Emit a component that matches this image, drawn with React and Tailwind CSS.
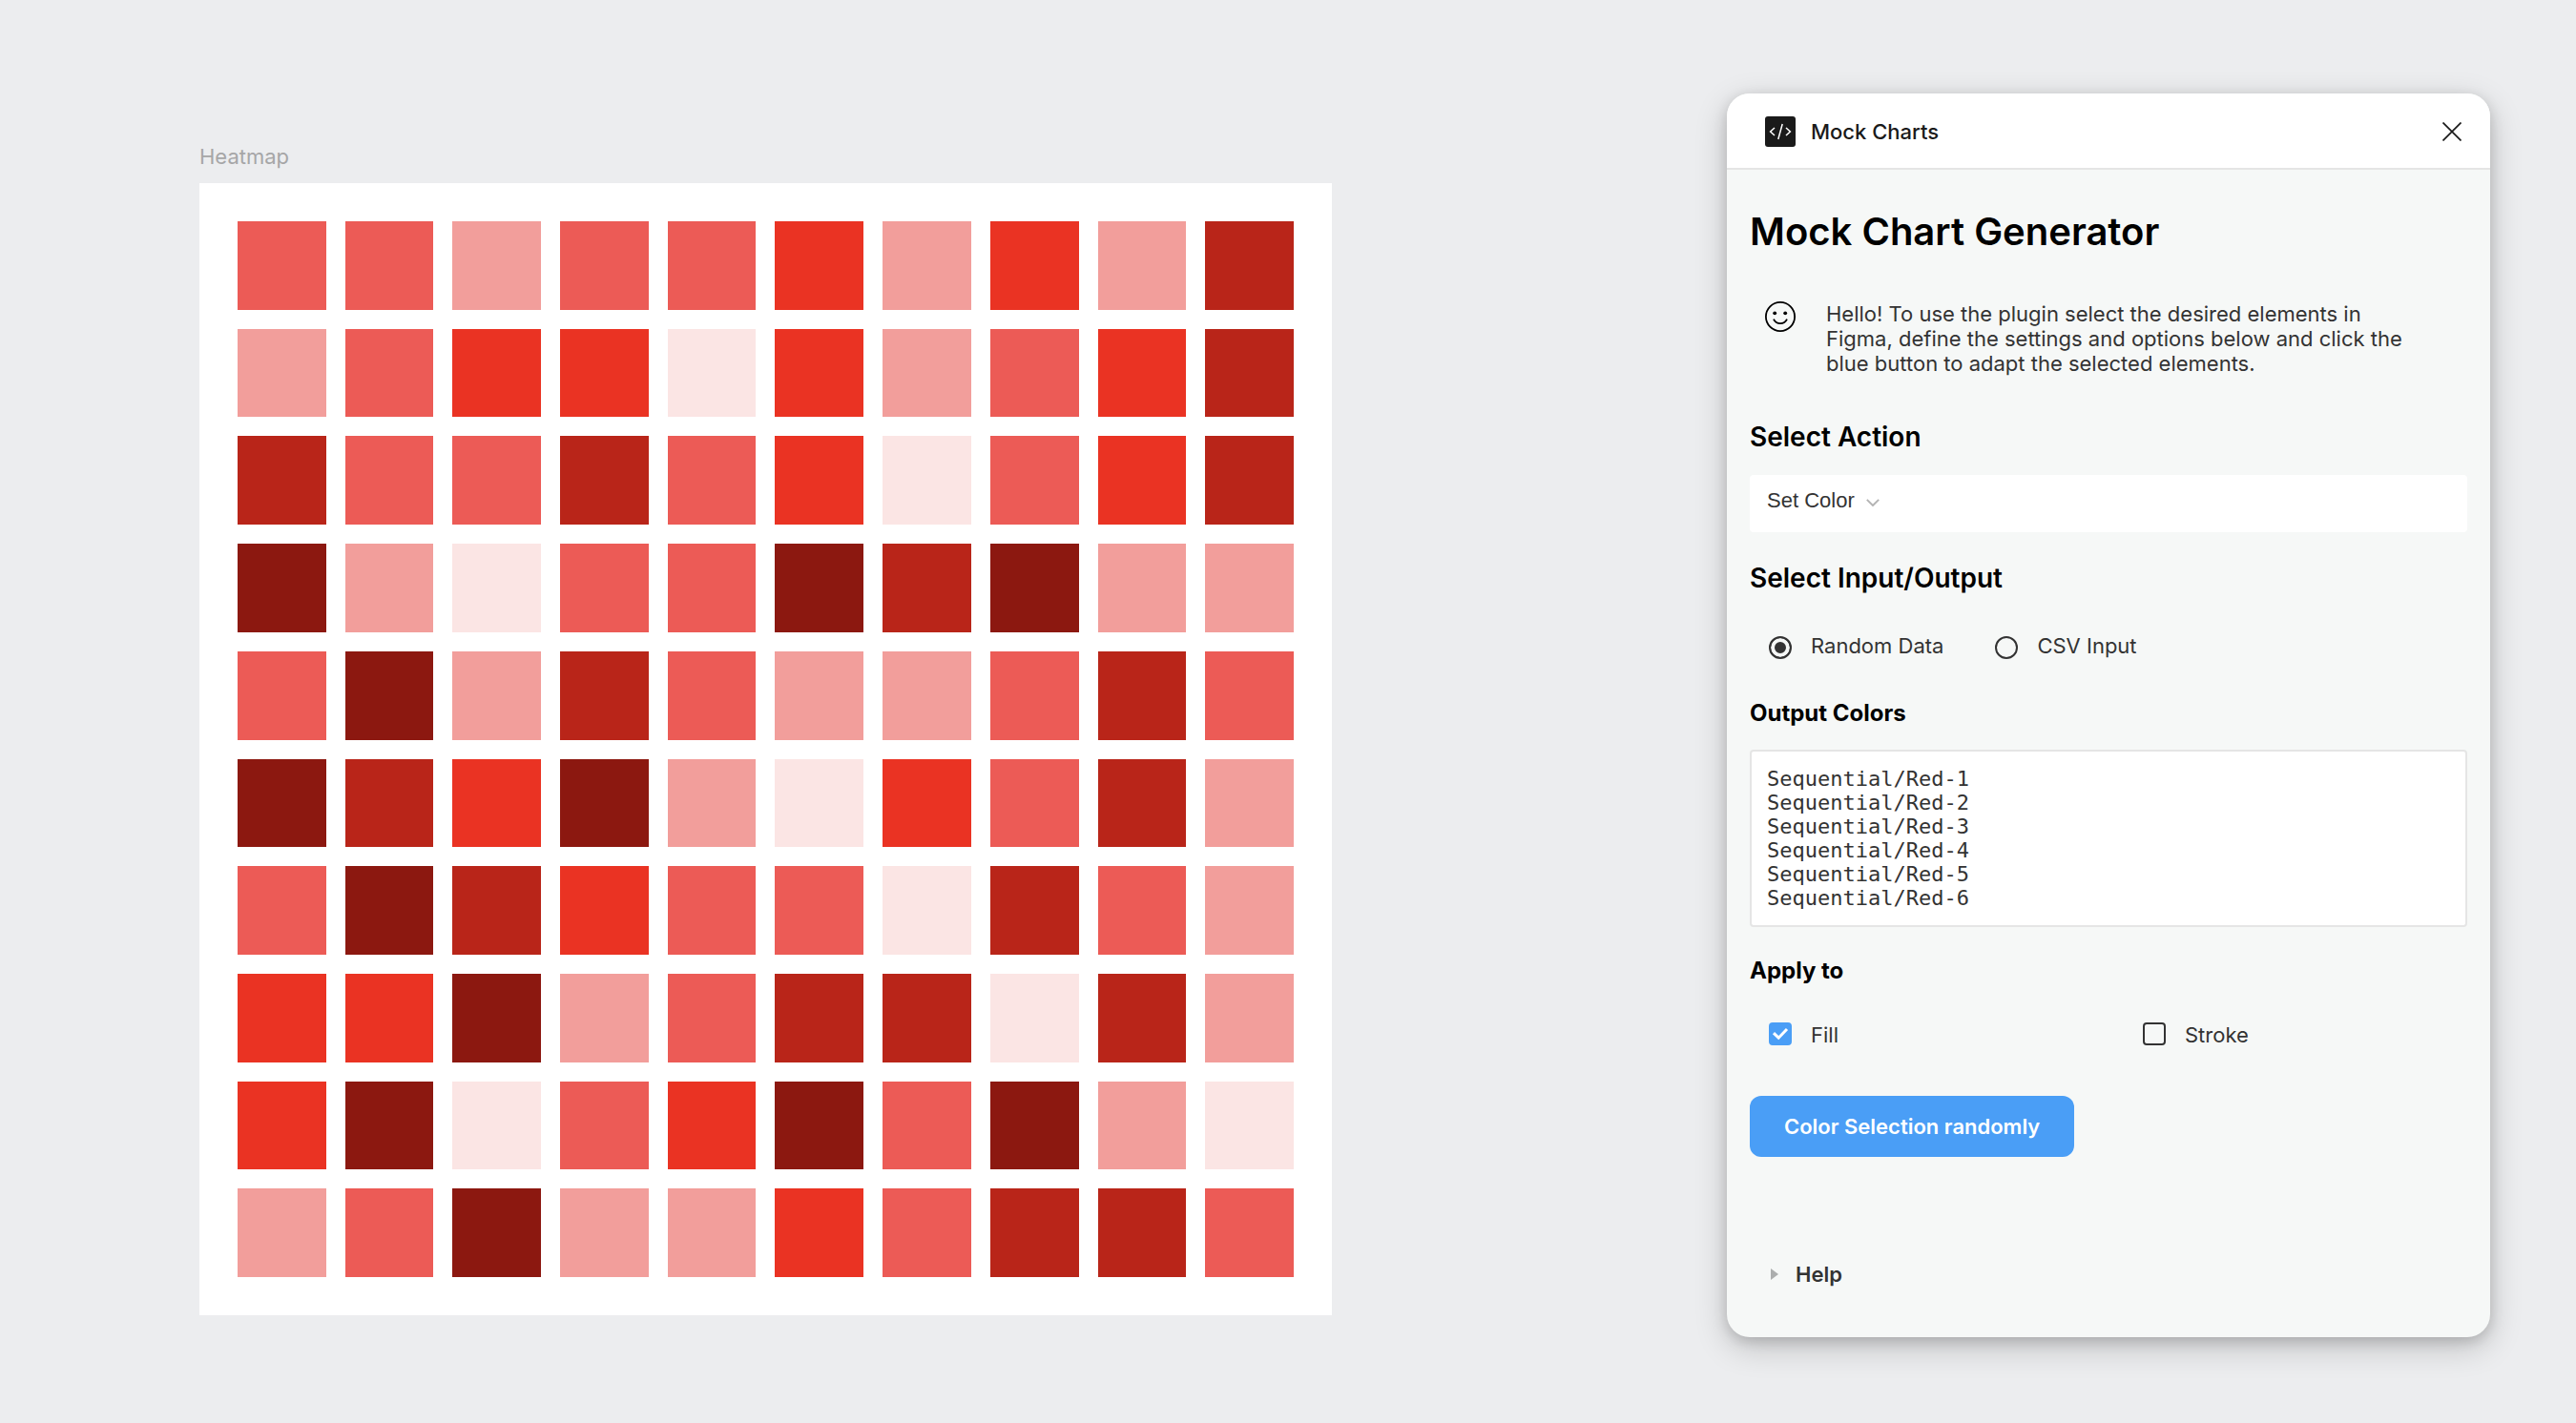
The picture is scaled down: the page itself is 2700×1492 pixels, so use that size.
import { useState } from "react";

const SHADES = {
  1: "bg-[#fbe5e4]",
  2: "bg-[#f29e9b]",
  3: "bg-[#ec5b56]",
  4: "bg-[#ea3323]",
  5: "bg-[#b92519]",
  6: "bg-[#8c1810]",
};

const ROWS = [
  [3, 3, 2, 3, 3, 4, 2, 4, 2, 5],
  [2, 3, 4, 4, 1, 4, 2, 3, 4, 5],
  [5, 3, 3, 5, 3, 4, 1, 3, 4, 5],
  [6, 2, 1, 3, 3, 6, 5, 6, 2, 2],
  [3, 6, 2, 5, 3, 2, 2, 3, 5, 3],
  [6, 5, 4, 6, 2, 1, 4, 3, 5, 2],
  [3, 6, 5, 4, 3, 3, 1, 5, 3, 2],
  [4, 4, 6, 2, 3, 5, 5, 1, 5, 2],
  [4, 6, 1, 3, 4, 6, 3, 6, 2, 1],
  [2, 3, 6, 2, 2, 4, 3, 5, 5, 3],
];

const OUTPUT_COLORS = [1, 2, 3, 4, 5, 6].map((n) => `Sequential/Red-${n}`).join("\n");

function CodeIcon() {
  return (
    <svg className="size-8 shrink-0" viewBox="0 0 32 32" fill="none" aria-hidden="true">
      <rect width="32" height="32" rx="3" fill="#1a1a1a" />
      <path
        d="M10 12L5.6 16L10 20M22 12L26.4 16L22 20M18.2 8L13.8 24"
        stroke="#fff"
        strokeWidth="1.5"
      />
    </svg>
  );
}

function CloseIcon() {
  return (
    <svg className="size-5" viewBox="0 0 20 20" fill="none" aria-hidden="true">
      <path d="M0.5 0.5L19.5 19.5M19.5 0.5L0.5 19.5" stroke="#1a1a1a" strokeWidth="1.7" />
    </svg>
  );
}

function SmileyIcon() {
  return (
    <svg className="size-8 shrink-0" viewBox="0 0 32 32" fill="none" aria-hidden="true">
      <circle cx="16" cy="16" r="15.1" stroke="#000" strokeWidth="1.8" />
      <circle cx="10.2" cy="12.3" r="1.9" fill="#000" />
      <circle cx="21.2" cy="12.3" r="1.9" fill="#000" />
      <path d="M9 18.6C10.4 21.6 13 23.1 16 23.1C19 23.1 21.6 21.6 23 18.6" stroke="#000" strokeWidth="1.8" />
    </svg>
  );
}

function Heatmap() {
  return (
    <figure className="pt-[53px]">
      <figcaption className="mb-[15px] text-[22px] leading-[26px] text-[#a6a6a7]">Heatmap</figcaption>
      <div className="grid grid-cols-10 gap-5 bg-white p-10">
        {ROWS.flat().map((shade, i) => (
          <div key={i} className={`aspect-square ${SHADES[shade]}`} />
        ))}
      </div>
    </figure>
  );
}

function Radio({ id, label, checked, onChange }) {
  return (
    <div className="flex items-end gap-5">
      <input
        type="radio"
        id={id}
        name="source"
        checked={checked}
        onChange={onChange}
        className="size-6 shrink-0 appearance-none rounded-full border-2 border-[#333] checked:bg-[#333] checked:shadow-[inset_0_0_0_4px_#f6f8f7]"
      />
      <label htmlFor={id} className="leading-7">
        {label}
      </label>
    </div>
  );
}

function Checkbox({ id, label, checked, onChange }) {
  return (
    <div className="flex items-start gap-5 pl-5">
      <div className="relative size-6 shrink-0">
        <input
          type="checkbox"
          id={id}
          checked={checked}
          onChange={onChange}
          className="block size-6 appearance-none rounded border-2 border-[#333] checked:border-[#4a9ef6] checked:bg-[#4a9ef6]"
        />
        {checked && (
          <svg
            className="pointer-events-none absolute inset-0 size-6"
            viewBox="0 0 24 24"
            fill="none"
            aria-hidden="true"
          >
            <path d="M5 11.2L10.2 16.2L19 7" stroke="#fff" strokeWidth="3" />
          </svg>
        )}
      </div>
      <label htmlFor={id} className="leading-[26px]">
        {label}
      </label>
    </div>
  );
}

function Panel() {
  const [source, setSource] = useState("random");
  const [fill, setFill] = useState(true);
  const [stroke, setStroke] = useState(false);

  return (
    <section className="overflow-hidden rounded-3xl bg-[#f6f8f7] text-[22px] leading-[26px] text-[#333] shadow-[0_10px_34px_rgba(0,0,0,0.2),0_4px_14px_rgba(0,0,0,0.15)]">
      <header className="flex h-20 items-center gap-4 border-b-2 border-[#e5e5e5] bg-white pt-0.5 pr-[30px] pl-10">
        <CodeIcon />
        <span className="flex-1 font-medium text-[#1a1a1a]">Mock Charts</span>
        <button type="button" aria-label="Close">
          <CloseIcon />
        </button>
      </header>

      <div className="px-6 pt-[41px] pb-[53px]">
        <h1 className="text-[40px] leading-[48px] font-semibold text-black">Mock Chart Generator</h1>

        <div className="mt-[49px] flex items-start gap-8 pr-9 pl-4">
          <SmileyIcon />
          <p>
            Hello! To use the plugin select the desired elements in Figma, define the settings and
            options below and click the blue button to adapt the selected elements.
          </p>
        </div>

        <h2 className="mt-[47px] text-[28px] leading-[34px] font-semibold text-black">
          <label htmlFor="action">Select Action</label>
        </h2>
        <div className="mt-[23px] flex h-[60px] items-center gap-3 rounded bg-white px-[18px] pb-[6px]">
          <select
            id="action"
            className="field-sizing-content appearance-none bg-transparent font-['Liberation_Sans',sans-serif]"
          >
            <option>Set Color</option>
          </select>
          <svg className="mt-1 h-2 w-[14px]" viewBox="0 0 14 8" fill="none" aria-hidden="true">
            <path d="M0.8 0.8L7 7L13.2 0.8" stroke="#b3b3b3" strokeWidth="1.9" />
          </svg>
        </div>

        <h2 className="mt-[31px] text-[28px] leading-[34px] font-semibold text-black">
          Select Input/Output
        </h2>
        <div className="mt-10 flex gap-[54px] pl-5">
          <Radio
            id="random"
            label="Random Data"
            checked={source === "random"}
            onChange={() => setSource("random")}
          />
          <Radio
            id="csv"
            label="CSV Input"
            checked={source === "csv"}
            onChange={() => setSource("csv")}
          />
        </div>

        <h3 className="mt-[43px] text-2xl leading-7 font-bold text-black">
          <label htmlFor="colors">Output Colors</label>
        </h3>
        <textarea
          id="colors"
          rows={6}
          defaultValue={OUTPUT_COLORS}
          className="mt-6 block w-full resize-none rounded border-2 border-[#e5e5e5] bg-white p-4 font-['DejaVu_Sans_Mono',monospace] leading-[25px]"
        />

        <h3 className="mt-8 text-2xl leading-7 font-bold text-black">Apply to</h3>
        <div className="mt-10 grid grid-cols-2 gap-8">
          <Checkbox id="fill" label="Fill" checked={fill} onChange={() => setFill(!fill)} />
          <Checkbox id="stroke" label="Stroke" checked={stroke} onChange={() => setStroke(!stroke)} />
        </div>

        <button
          type="button"
          className="mt-[51px] block h-16 rounded-xl bg-[#4a9ef6] px-9 font-semibold text-white"
        >
          Color Selection randomly
        </button>

        <details className="mt-[110px] pl-[22px]">
          <summary className="flex list-none items-center gap-[18px] font-semibold">
            <svg className="h-3 w-2" viewBox="0 0 8 12" aria-hidden="true">
              <path d="M0 0L8 6L0 12Z" fill="#acaeae" />
            </svg>
            Help
          </summary>
        </details>
      </div>
    </section>
  );
}

export default function App() {
  return (
    <main className="grid min-h-screen grid-cols-[1187fr_800fr] items-start gap-x-[414px] bg-[#ecedef] pt-[98px] pr-[90px] pb-[90px] pl-[209px] font-[Inter,sans-serif]">
      <Heatmap />
      <Panel />
    </main>
  );
}
